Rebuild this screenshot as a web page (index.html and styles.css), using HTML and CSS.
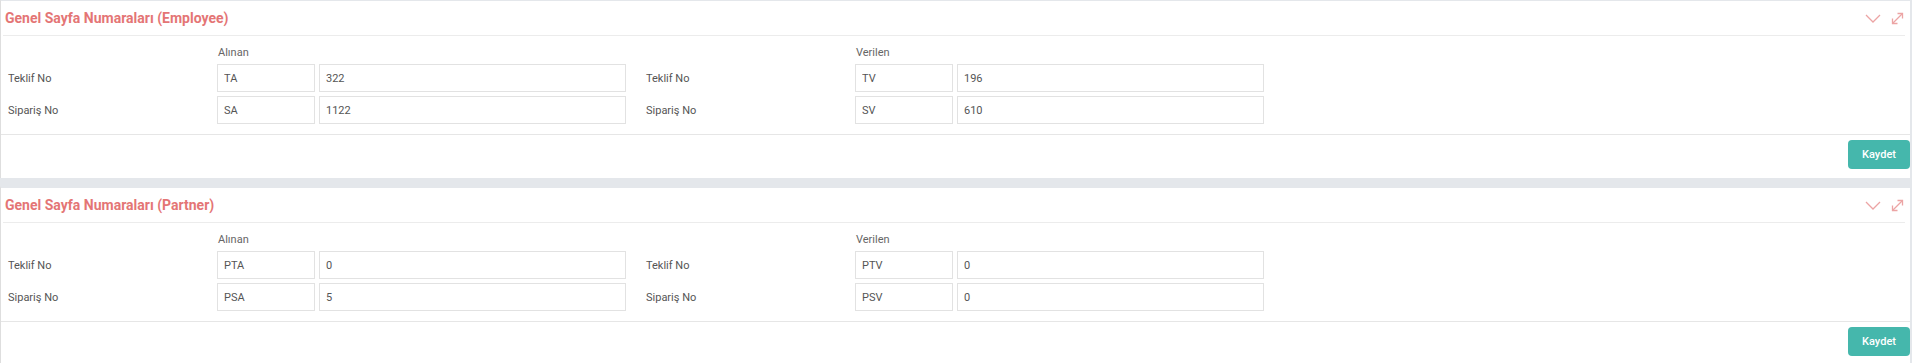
FILE: index.html
```html
<!DOCTYPE html>
<html lang="tr">
<head>
    <meta charset="UTF-8">
    <meta name="viewport" content="width=device-width, initial-scale=1.0">
    <title>Genel Sayfa Numaraları</title>
    <link rel="stylesheet" href="styles.css">
</head>
<body>
    <div class="page">
        <div class="panel">
            <div class="panel-header">
                <h2 class="panel-title">Genel Sayfa Numaraları (Employee)</h2>
                <div class="panel-tools">
                    <svg class="tool" width="16" height="9" viewBox="0 0 16 9"><polyline points="1,1 8,8 15,1"/></svg>
                    <svg class="tool" width="13" height="13" viewBox="0 0 13 13"><line x1="1.5" y1="11.5" x2="11.5" y2="1.5"/><polyline points="6.5,1.5 11.5,1.5 11.5,6.5"/><polyline points="1.5,6.5 1.5,11.5 6.5,11.5"/></svg>
                </div>
            </div>
            <div class="panel-body">
                <div class="half">
                    <span></span>
                    <span class="col-title">Alınan</span>
                    <span></span>
                    <label>Teklif No</label>
                    <input type="text" value="TA">
                    <input type="text" value="322">
                    <label>Sipariş No</label>
                    <input type="text" value="SA">
                    <input type="text" value="1122">
                </div>
                <div class="half">
                    <span></span>
                    <span class="col-title">Verilen</span>
                    <span></span>
                    <label>Teklif No</label>
                    <input type="text" value="TV">
                    <input type="text" value="196">
                    <label>Sipariş No</label>
                    <input type="text" value="SV">
                    <input type="text" value="610">
                </div>
            </div>
            <div class="panel-footer">
                <button class="btn-save">Kaydet</button>
            </div>
        </div>

        <div class="panel">
            <div class="panel-header">
                <h2 class="panel-title">Genel Sayfa Numaraları (Partner)</h2>
                <div class="panel-tools">
                    <svg class="tool" width="16" height="9" viewBox="0 0 16 9"><polyline points="1,1 8,8 15,1"/></svg>
                    <svg class="tool" width="13" height="13" viewBox="0 0 13 13"><line x1="1.5" y1="11.5" x2="11.5" y2="1.5"/><polyline points="6.5,1.5 11.5,1.5 11.5,6.5"/><polyline points="1.5,6.5 1.5,11.5 6.5,11.5"/></svg>
                </div>
            </div>
            <div class="panel-body">
                <div class="half">
                    <span></span>
                    <span class="col-title">Alınan</span>
                    <span></span>
                    <label>Teklif No</label>
                    <input type="text" value="PTA">
                    <input type="text" value="0">
                    <label>Sipariş No</label>
                    <input type="text" value="PSA">
                    <input type="text" value="5">
                </div>
                <div class="half">
                    <span></span>
                    <span class="col-title">Verilen</span>
                    <span></span>
                    <label>Teklif No</label>
                    <input type="text" value="PTV">
                    <input type="text" value="0">
                    <label>Sipariş No</label>
                    <input type="text" value="PSV">
                    <input type="text" value="0">
                </div>
            </div>
            <div class="panel-footer">
                <button class="btn-save">Kaydet</button>
            </div>
        </div>
    </div>
</body>
</html>
```

FILE: styles.css
```css
body {
    margin: 0;
    padding: 0;
    font-family: Roboto, "Liberation Sans", Arial, sans-serif;
    background-color: #e4e7eb;
    overflow: hidden;
}

.page {
    margin-top: -1px;
}

.panel {
    background-color: #fff;
    border-top: 2px solid #e4e7eb;
    border-left: 1px solid #dedede;
    margin-right: 2px;
    margin-bottom: 8px;
}

.panel-header {
    height: 34px;
    margin: 0 5px 0 2px;
    padding-left: 2px;
    border-bottom: 1px solid #ececec;
    display: flex;
    align-items: center;
    justify-content: space-between;
}

.panel-title {
    margin: 0;
    font-size: 14px;
    font-weight: 700;
    color: #e47575;
}

.panel-tools {
    display: flex;
    align-items: center;
    gap: 10px;
    padding-right: 1px;
}

.tool {
    fill: none;
    stroke: #eca4a4;
    stroke-width: 1.3;
}

.panel-body {
    display: flex;
    gap: 20px;
    padding: 9px 0 10px 7px;
    border-bottom: 1px solid #e6e6e6;
}

.half {
    display: grid;
    grid-template-columns: 205px 98px 307px;
    grid-template-rows: 15px 28px 28px;
    column-gap: 4px;
    row-gap: 4px;
    align-items: center;
}

.col-title {
    font-size: 11px;
    color: #666;
    padding-left: 1px;
}

.half label {
    font-size: 11px;
    color: #555;
}

.half input {
    box-sizing: border-box;
    height: 28px;
    width: 100%;
    margin: 0;
    padding: 0 6px;
    border: 1px solid #e2e2e2;
    border-radius: 0;
    font-family: inherit;
    font-size: 11px;
    color: #555;
    outline: none;
}

.panel-footer {
    display: flex;
    justify-content: flex-end;
    padding: 5px 0 9px 0;
}

.btn-save {
    width: 62px;
    height: 29px;
    border: none;
    border-radius: 4px;
    background-color: #45b7ac;
    color: #fff;
    font-family: inherit;
    font-size: 11px;
    font-weight: 500;
    cursor: pointer;
}
```
